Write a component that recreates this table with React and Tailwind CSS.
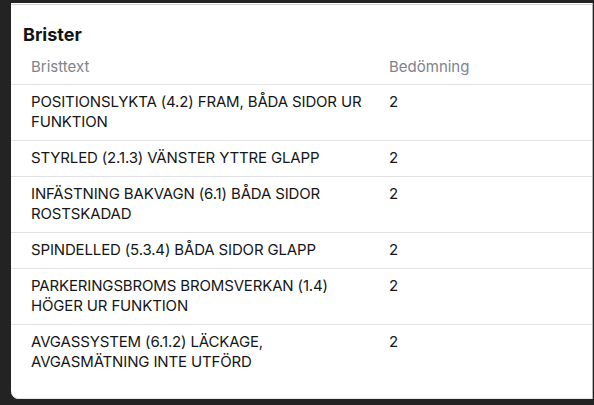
import React from "react";

// line breaks follow the reference layout
const ROWS = [
  { lines: ["POSITIONSLYKTA (4.2) FRAM, BÅDA SIDOR UR", "FUNKTION"], grade: 2 },
  { lines: ["STYRLED (2.1.3) VÄNSTER YTTRE GLAPP"], grade: 2 },
  { lines: ["INFÄSTNING BAKVAGN (6.1) BÅDA SIDOR", "ROSTSKADAD"], grade: 2 },
  { lines: ["SPINDELLED (5.3.4) BÅDA SIDOR GLAPP"], grade: 2 },
  { lines: ["PARKERINGSBROMS BROMSVERKAN (1.4)", "HÖGER UR FUNKTION"], grade: 2 },
  { lines: ["AVGASSYSTEM (6.1.2) LÄCKAGE,", "AVGASMÄTNING INTE UTFÖRD"], grade: 2 },
];

export default function App() {
  return (
    <div
      className="w-[594px] h-[405px] bg-[#232323] overflow-hidden pt-[3px] pl-[11px] pr-px"
      style={{ fontFamily: "Inter, 'Noto Sans', sans-serif" }}
    >
      <div className="bg-white h-[396px] rounded-bl-lg border-r border-[#b4b4b4] shadow-[inset_0_-1px_0_#e6e6e6]">
        {/* top separator from the section above */}
        <div className="h-px" />
        <div className="h-px bg-[#d4d4d8]" />

        <h2 className="pl-3 pt-[18px] text-[18px] leading-6 font-bold text-[#141414]">Brister</h2>

        {/* table header */}
        <div className="grid grid-cols-[378px_1fr] border-b border-[#e2e2e6] pt-[10px] pb-[7px] text-[15px] leading-5 text-[#80838c]">
          <div className="pl-5">Bristtext</div>
          <div>Bedömning</div>
        </div>

        {/* rows */}
        {ROWS.map((r, i) => (
          <div
            key={i}
            className={`grid grid-cols-[378px_1fr] pt-[7px] pb-2 text-[15px] tracking-[-0.01em] leading-5 text-[#161616] ${
              i < ROWS.length - 1 ? "border-b border-[#e2e2e6]" : ""
            }`}
          >
            <div className="pl-5 pr-2">
              {r.lines.map((l) => (
                <div key={l} className="whitespace-nowrap">{l}</div>
              ))}
            </div>
            <div>{r.grade}</div>
          </div>
        ))}
      </div>
    </div>
  );
}
